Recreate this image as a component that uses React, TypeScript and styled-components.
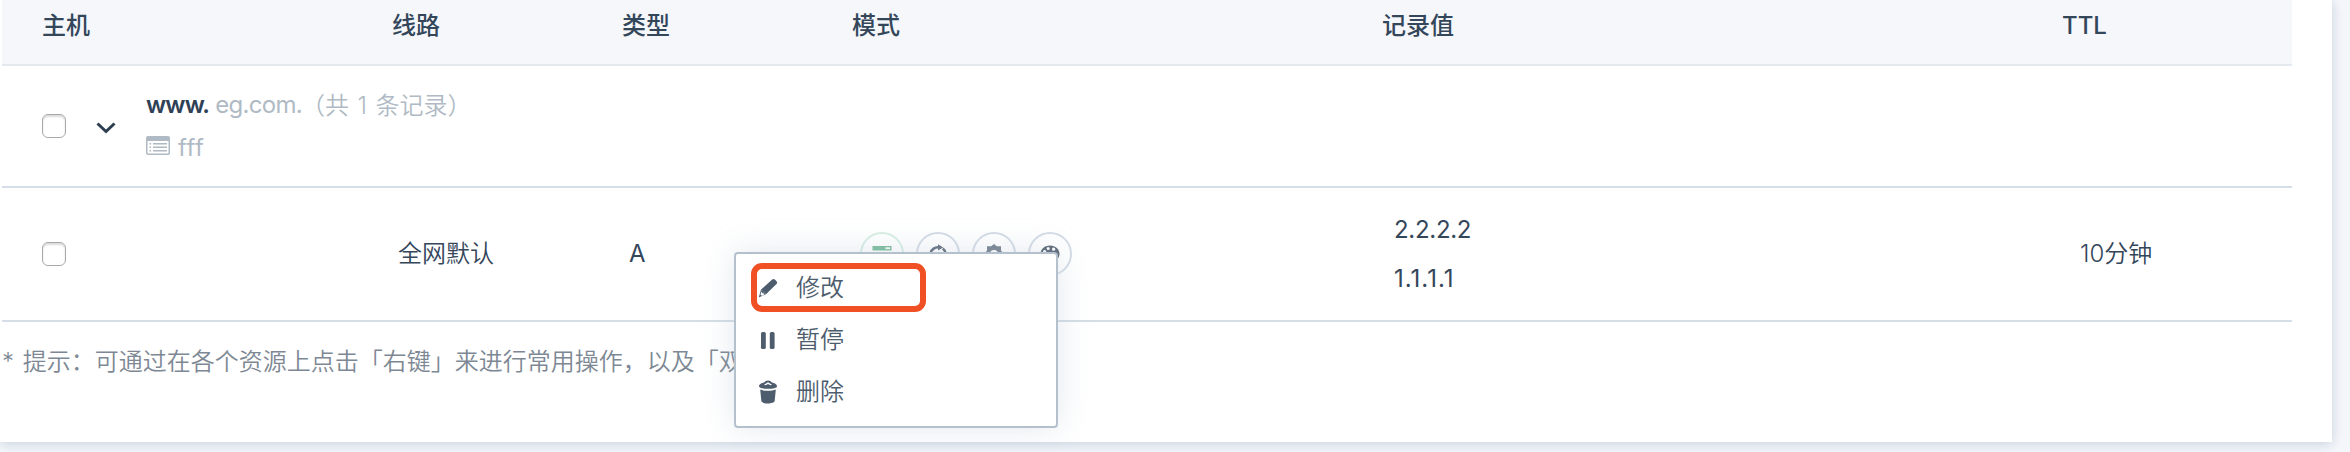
import React from "react";
import styled, { createGlobalStyle } from "styled-components";

const GlobalStyle = createGlobalStyle`
  * { box-sizing: border-box; }
  body {
    margin: 0;
    background: #f5f7fb;
    font-family: Inter, "Noto Sans CJK SC", sans-serif;
    font-size: 24px;
    font-weight: 350;
    color: #34465a;
    overflow: hidden;
  }
`;

const Page = styled.div`
  height: 452px;
  overflow: hidden;
`;

const Card = styled.main`
  position: relative;
  width: 2332px;
  height: 442px;
  padding-left: 2px;
  background: #fff;
  box-shadow: 0 2px 12px rgba(168, 184, 204, 0.6);
`;

const Row = styled.div<{ $height: number; $head?: boolean }>`
  display: grid;
  grid-template-columns: 350px 230px 230px 530px 680px 1fr;
  align-items: center;
  width: 2290px;
  height: ${(p) => p.$height}px;
  padding-left: 40px;
  border-bottom: 2px solid ${(p) => (p.$head ? "#e3e9ef" : "#d5dee7")};
  background: ${(p) => (p.$head ? "#f5f7fb" : "#fff")};
`;

const HeadCell = styled.div`
  height: 64px;
  line-height: 52px;
  font-weight: 500;
`;

const Cell = styled.div<{ $indent?: number; $latin?: boolean }>`
  padding-left: ${(p) => p.$indent ?? 0}px;
  font-weight: ${(p) => (p.$latin ? 400 : 350)};
  line-height: 50px;
  white-space: nowrap;
`;

const HostGroup = styled.div`
  display: flex;
  align-items: center;
  height: 120px;
  white-space: nowrap;
`;

const Checkbox = styled.span`
  flex: none;
  width: 24px;
  height: 24px;
  border: 1px solid #a9a9a9;
  border-radius: 6px;
  background: #fff;
  box-shadow: inset 0 2px 2px rgba(0, 0, 0, 0.14);
`;

const Chevron = styled.svg`
  flex: none;
  margin: 3px 30px 0 30px;
`;

const HostText = styled.div`
  display: flex;
  flex-direction: column;
  color: #b0bac4;
`;

const HostLine = styled.div<{ $gap?: number }>`
  display: flex;
  align-items: center;
  gap: ${(p) => p.$gap ?? 0}px;
  height: 42px;
  line-height: 42px;
  white-space: pre;
`;

const HostName = styled.b`
  color: #2f4156;
  font-weight: 600;
  letter-spacing: -0.8px;
`;

const Domain = styled.span`
  font-weight: 400;
  letter-spacing: -0.7px;
`;

const Count = styled.span`
  margin-left: -1px;
  padding-top: 2px;
  word-spacing: 1.8px;
`;

const Remark = styled.span`
  padding-top: 1px;
  font-weight: 400;
  letter-spacing: 0.6px;
`;

const Values = styled.div`
  padding-left: 12px;
  font-weight: 400;
  line-height: 49px;
`;

const Value = styled.div<{ $spacing: number }>`
  letter-spacing: ${(p) => p.$spacing}px;
`;

const Modes = styled.div`
  display: flex;
  gap: 12px;
  padding-left: 8px;
`;

const ModeBadge = styled.span<{ $green?: boolean }>`
  display: flex;
  align-items: center;
  justify-content: center;
  width: 44px;
  height: 44px;
  border: 2px solid ${(p) => (p.$green ? "#d8efe5" : "#d5dde7")};
  border-radius: 50%;
  background: #fff;
`;

const Tip = styled.p`
  margin: 0;
  line-height: 80px;
  color: #7d8894;
  white-space: nowrap;
  word-spacing: 2px;
`;

const Menu = styled.ul`
  position: absolute;
  top: 252px;
  left: 734px;
  width: 324px;
  height: 176px;
  margin: 0;
  padding: 8px 0 0 22px;
  border: 2px solid #b5c0cd;
  border-radius: 4px;
  background: #fff;
  box-shadow: 0 0 32px rgba(160, 178, 200, 0.3);
  list-style: none;
`;

const MenuItem = styled.li`
  display: flex;
  align-items: center;
  gap: 18px;
  height: 52px;
  line-height: 52px;
  color: #4e5d6e;
`;

const Highlight = styled.span`
  position: absolute;
  top: 9px;
  left: 15px;
  width: 175px;
  height: 49px;
  border: 6px solid #f15025;
  border-radius: 11px;
`;

const PencilIcon = () => (
  <svg width="20" height="20" viewBox="0 0 20 20" fill="#4e5d6e">
    <path d="M14.2 1.6a2 2 0 0 1 2.6 0l1.7 1.6a1.9 1.9 0 0 1 0 2.7L8 16.2 3 11.6z" />
    <path
      fillRule="evenodd"
      d="M3 11.6 8 16.2.8 19.4zM3.6 13.6 2.4 16.4l1.5 1.4 2.5-1.2-.4-1.2-1.5-.2z"
    />
  </svg>
);

const PauseIcon = () => (
  <svg width="20" height="20" viewBox="0 0 20 20" fill="#4e5d6e">
    <rect x="3" y="2" width="4.8" height="17" rx="1.6" />
    <rect x="11.8" y="2" width="4.8" height="17" rx="1.6" />
  </svg>
);

const TrashIcon = () => (
  <svg width="20" height="24" viewBox="0 0 20 24" fill="#4e5d6e">
    <path
      fillRule="evenodd"
      d="M1 6.2C1 4.3 4 2.9 6 2.6 7 1.3 8.3.6 10 .6s3 .7 4 2c2 .3 5 1.7 5 3.6C19 8 15 8.8 10 8.8S1 8 1 6.2zM6 4.8 10 2.200l4 2.600-1.600.5-2.400-1.300-2.400 1.300z"
    />
    <path d="M2.200 9.600c2 .9 4.800 1.200 7.800 1.200s5.800-.3 7.800-1.200l-1.100 11.200c-.3 1.800-3.400 2.700-6.700 2.700s-6.400-.9-6.700-2.700z" />
  </svg>
);

const ServerIcon = () => (
  <svg width="20" height="20" viewBox="0 0 20 20">
    <rect x="0.500" y="2" width="19" height="4.500" fill="#7fbf9f" />
    <rect x="13.500" y="3.300" width="4.500" height="1.800" fill="#fff" />
    <rect x="0.500" y="8.500" width="19" height="4.500" fill="#7fbf9f" />
    <rect x="0.500" y="15" width="19" height="4.500" fill="#7fbf9f" />
  </svg>
);

const RefreshIcon = () => (
  <svg width="20" height="20" viewBox="0 0 20 20" fill="none" stroke="#677383" strokeWidth="2.600">
    <path d="M2.300 9.500A7.800 7.800 0 0 1 11.500 3.400M14.800 4.500A7.800 7.800 0 0 1 17.700 9.500a7.700 7.700 0 0 1-15.400 1" />
    <path d="M10 .200 15.200 3.400 10 6.600z" fill="#677383" stroke="none" />
  </svg>
);

const GearIcon = () => (
  <svg width="20" height="20" viewBox="0 0 20 20" fill="#7a8593">
    <path
      fillRule="evenodd"
      d="m10 0 2.800 2.200H17v4.200L20 10l-3 3.600v4.200h-4.200L10 20l-2.800-2.200H3v-4.200L0 10l3-3.600V2.200h4.200zM10 6a4 4 0 1 0 0 8 4 4 0 0 0 0-8z"
    />
  </svg>
);

const PaletteIcon = () => (
  <svg width="20" height="20" viewBox="0 0 20 20">
    <path d="M10 1.500c5.500 0 9.500 3.700 9.500 8.500 0 2-1 4-2.500 6l-7 1c-6 0-9.500-2-9.500-7S4.500 1.500 10 1.500z" fill="#5f6b7b" />
    <circle cx="4.600" cy="7.500" r="1.600" fill="#fff" />
    <circle cx="8.200" cy="4.600" r="1.500" fill="#fff" />
    <circle cx="13.600" cy="5.200" r="1.600" fill="#fff" />
  </svg>
);

const RemarkIcon = styled.svg`
  margin-bottom: 3px;
`;

const ListIcon = () => (
  <RemarkIcon width="24" height="19" viewBox="0 0 24 19" fill="#b0bac4">
    <path
      fillRule="evenodd"
      d="M2 0h20a2 2 0 0 1 2 2v15a2 2 0 0 1-2 2H2a2 2 0 0 1-2-2V2a2 2 0 0 1 2-2zM1.500 5v11.500a1 1 0 0 0 1 1h19a1 1 0 0 0 1-1V5z"
    />
    <path d="M3.500 7h1.600v1.500H3.500zM7 7h14v1.500H7zM3.500 10.500h1.600V12H3.500zM7 10.500h14V12H7zM3.500 14h1.600v1.500H3.500zM7 14h14v1.500H7z" />
  </RemarkIcon>
);

const columns = ["主机", "线路", "类型", "模式", "记录值", "TTL"];

const menuItems = [
  { label: "修改", Icon: PencilIcon },
  { label: "暂停", Icon: PauseIcon },
  { label: "删除", Icon: TrashIcon },
];

export default function App() {
  return (
    <Page>
      <GlobalStyle />
      <Card>
        <Row $height={66} $head>
          {columns.map((name) => (
            <HeadCell key={name}>{name}</HeadCell>
          ))}
        </Row>
        <Row $height={122}>
          <HostGroup>
            <Checkbox />
            <Chevron width="20" height="12" viewBox="0 0 20 12" fill="none" stroke="#2c3e50" strokeWidth="3">
              <path d="m1.500 1.500 8.500 8 8.500-8" />
            </Chevron>
            <HostText>
              <HostLine>
                <HostName>www.</HostName>
                <Domain> eg.com.</Domain>
                <Count>（共 1 条记录）</Count>
              </HostLine>
              <HostLine $gap={8}>
                <ListIcon />
                <Remark>fff</Remark>
              </HostLine>
            </HostText>
          </HostGroup>
        </Row>
        <Row $height={134}>
          <HostGroup>
            <Checkbox />
          </HostGroup>
          <Cell $indent={6}>全网默认</Cell>
          <Cell $indent={7} $latin>
            A
          </Cell>
          <Modes>
            <ModeBadge $green>
              <ServerIcon />
            </ModeBadge>
            <ModeBadge>
              <RefreshIcon />
            </ModeBadge>
            <ModeBadge>
              <GearIcon />
            </ModeBadge>
            <ModeBadge>
              <PaletteIcon />
            </ModeBadge>
          </Modes>
          <Values>
            <Value $spacing={-0.3}>2.2.2.2</Value>
            <Value $spacing={1}>1.1.1.1</Value>
          </Values>
          <Cell $indent={18}>10分钟</Cell>
        </Row>
        <Tip>* 提示：可通过在各个资源上点击「右键」来进行常用操作，以及「双击</Tip>
        <Menu>
          {menuItems.map(({ label, Icon }) => (
            <MenuItem key={label}>
              <Icon />
              {label}
            </MenuItem>
          ))}
          <Highlight />
        </Menu>
      </Card>
    </Page>
  );
}
